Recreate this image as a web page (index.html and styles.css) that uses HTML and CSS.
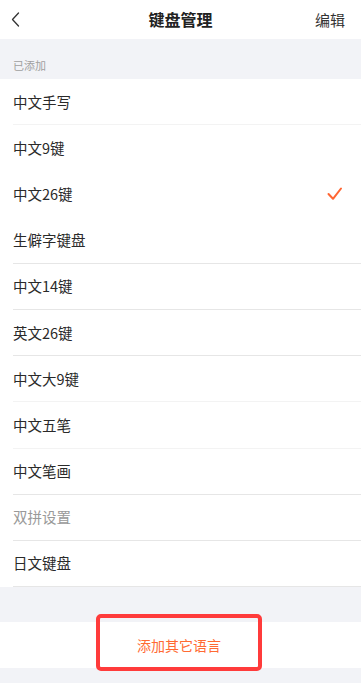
FILE: index.html
```html
<!DOCTYPE html>
<html lang="zh-CN">
<head>
<meta charset="utf-8">
<meta name="viewport" content="width=device-width, initial-scale=1">
<title>键盘管理</title>
<link rel="stylesheet" href="styles.css">
</head>
<body>
<div class="page">
  <header class="nav">
    <span class="back">
      <svg width="12" height="18" viewBox="0 0 12 18"><path d="M7.5 2 L1.5 8.5 L7.5 15" fill="none" stroke="#333" stroke-width="1.3" stroke-linecap="round" stroke-linejoin="round"/></svg>
    </span>
    <h1 class="title">键盘管理</h1>
    <span class="edit">编辑</span>
  </header>
  <div class="section-title">已添加</div>
  <ul class="list">
    <li class="row faint"><span>中文手写</span></li>
    <li class="row none"><span>中文9键</span></li>
    <li class="row none"><span>中文26键</span>
      <svg class="check" width="16" height="14" viewBox="0 0 16 14"><path d="M1.5 7 L6 11.8 L14 1.5" fill="none" stroke="#ff6633" stroke-width="2" stroke-linecap="round" stroke-linejoin="round"/></svg>
    </li>
    <li class="row"><span>生僻字键盘</span></li>
    <li class="row"><span>中文14键</span></li>
    <li class="row"><span>英文26键</span></li>
    <li class="row faint"><span>中文大9键</span></li>
    <li class="row faint"><span>中文五笔</span></li>
    <li class="row"><span>中文笔画</span></li>
    <li class="row"><span class="muted">双拼设置</span></li>
    <li class="row"><span>日文键盘</span></li>
  </ul>
  <div class="gap"></div>
  <div class="add">添加其它语言</div>
  <div class="highlight"></div>
</div>
</body>
</html>
```
FILE: styles.css
```css
* { box-sizing: border-box; margin: 0; padding: 0; }
html, body { background: #f2f3f7; }
body {
  font-family: "Noto Sans CJK SC", "Noto Sans", "Liberation Sans", sans-serif;
  color: #333;
}
.page { position: relative; width: 361px; min-height: 683px; }
.nav {
  height: 39px;
  background: #fff;
  display: flex;
  align-items: center;
  justify-content: space-between;
  padding: 0 16px 0 11px;
  position: relative;
}
.back { display: flex; width: 12px; height: 18px; }
.title {
  position: absolute;
  left: 0; right: 0;
  text-align: center;
  font-size: 16px;
  font-weight: 700;
  line-height: 39px;
  color: #222;
  pointer-events: none;
}
.edit { font-size: 15px; color: #333; line-height: 39px; }
.section-title {
  height: 40px;
  padding: 19px 0 0 13px;
  font-size: 11px;
  line-height: 14px;
  color: #a0a0a0;
}
.list { list-style: none; background: #fff; padding-left: 13px; }
.row {
  height: 46.2px;
  display: flex;
  align-items: center;
  justify-content: space-between;
  padding-right: 18px;
  border-bottom: 1px solid #e6e6e6;
  font-size: 14.5px;
  color: #2a2a2a;
}
.row.faint { border-bottom-color: #f3f3f3; }
.row.none { border-bottom-color: #fff; }
.row span { line-height: 20px; }
.muted { color: #999; }
.check { display: block; }
.gap { height: 35px; }
.add {
  height: 46px;
  background: #fff;
  display: flex;
  align-items: center;
  justify-content: center;
  font-size: 14px;
  color: #ff6a33;
  padding-right: 3px;
}
.highlight {
  position: absolute;
  left: 96px;
  top: 614px;
  width: 166px;
  height: 57px;
  border: 4px solid #ff3b3b;
  border-radius: 5px;
}
```
